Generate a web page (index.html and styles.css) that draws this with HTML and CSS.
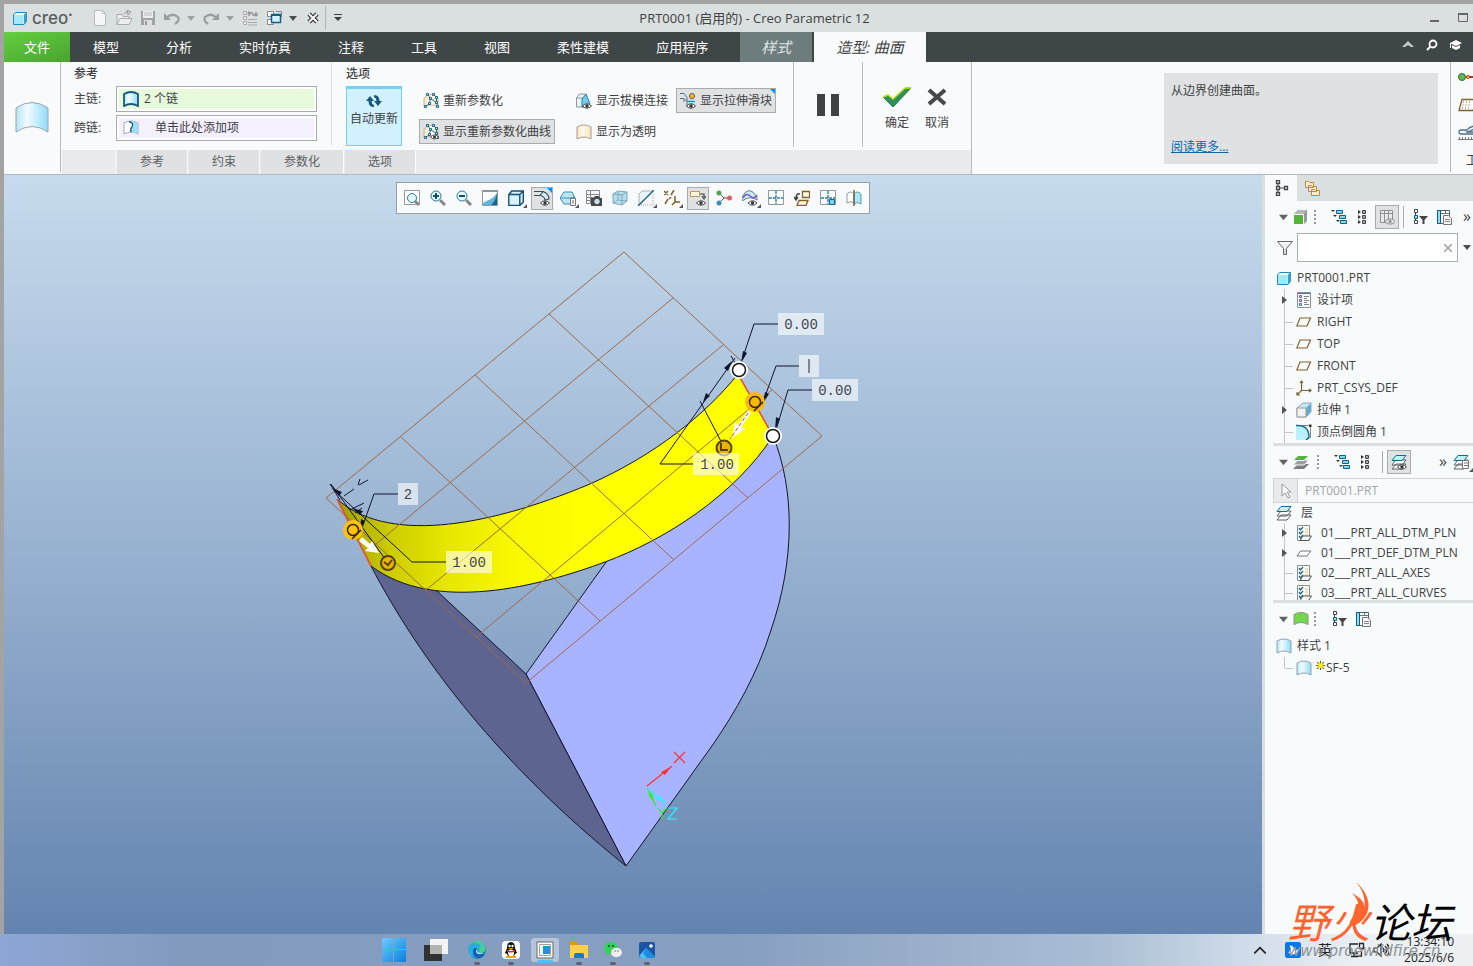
FILE: index.html
```html
<!DOCTYPE html>
<html lang="zh-CN">
<head>
    <meta charset="UTF-8">
    <meta name="viewport" content="width=device-width, initial-scale=1.0">
    <title>PRT0001 (启用的) - Creo Parametric 12</title>
    <link rel="stylesheet" href="styles.css">
</head>
<body>
    <!-- icon sprite -->
    <svg class="sprite" width="0" height="0" aria-hidden="true">
        <defs>
            <linearGradient id="gBlue"><stop offset="0" stop-color="#b4e6f8"/><stop offset=".35" stop-color="#f2fbff"/><stop offset="1" stop-color="#8fdcf8"/></linearGradient>
            <linearGradient id="gTan"><stop offset="0" stop-color="#fbe3bd"/><stop offset=".4" stop-color="#fffaf0"/><stop offset="1" stop-color="#fbe3bd"/></linearGradient>
            <linearGradient id="gGrey" x2="0" y2="1"><stop offset="0" stop-color="#fafafa"/><stop offset="1" stop-color="#cfd1d2"/></linearGradient>
            <linearGradient id="gYellow"><stop offset="0" stop-color="#9c9c00"/><stop offset=".12" stop-color="#cccc00"/><stop offset=".25" stop-color="#e6e600"/><stop offset=".4" stop-color="#f8f800"/><stop offset=".55" stop-color="#ffff00"/></linearGradient>
            <linearGradient id="gEdge" x2="1" y2="1"><stop offset="0" stop-color="#2a8fd8"/><stop offset=".45" stop-color="#2ab4dd"/><stop offset="1" stop-color="#0c4f9f"/></linearGradient>
            <linearGradient id="gWin" x2="1" y2="1"><stop offset="0" stop-color="#6ccdff"/><stop offset="1" stop-color="#0a80dc"/></linearGradient>
        </defs>
        <symbol id="caret" viewBox="0 0 8 5"><path d="M0 0h8L4 5z" fill="currentColor"/></symbol>
        <symbol id="surface" viewBox="0 0 16 16"><path d="M1 3q7-4 14 0v12q-7-4-14 0z" fill="url(#gBlue)" stroke="#93a1a8"/></symbol>
        <symbol id="surface-dark" viewBox="0 0 16 16"><path d="M1 3q7-4 14 0v12q-7-4-14 0z" fill="url(#gBlue)" stroke="#15597d" stroke-width="1.8"/></symbol>
        <symbol id="surface-green" viewBox="0 0 16 16"><path d="M1 3.500q7-4 14 0v10q-7-4-14 0z" fill="#74d84e" stroke="#8b9090"/></symbol>
        <symbol id="surface-cross" viewBox="0 0 16 16"><path d="M1 3q7-4 14 0v11q-7-4-14 0z" fill="#fff" stroke="#a0a6a8"/><path d="M8 1q4 0 7 2v11q-3-2-7-2 0-3 1-4 2-3-1-5z" fill="#9fe0f7"/><path d="M6 2q5 0 3 5-2 2-1 5" fill="none" stroke="#15597d" stroke-width="1.300"/></symbol>
        <symbol id="cube" viewBox="0 0 16 16"><path d="M1.500 4.500L4 2.500h10.500v9L12 14.500H1.500z" fill="#e8f9ff" stroke="#2788b3"/><path d="M2 5h9.500v9H2z" fill="#a5e7fb"/><path d="M12 4.500l2.500-2v9l-2.500 3z" fill="#35a3d0"/></symbol>
        <symbol id="cube-green" viewBox="0 0 16 16"><path d="M1 5l4-4h9v11l-3 3z" fill="#969899"/><path d="M1 5l4-4h9l-3.500 4z" fill="#b5b8b9"/><path d="M1 6h9v9H1z" fill="#54b435"/><path d="M1 5.500h9.500V15" fill="none" stroke="#f8fafc"/></symbol>
        <symbol id="extrude" viewBox="0 0 16 16"><path d="M1 6l6-5h8v9l-5 5H1z" fill="#c8eaf5" stroke="#84919a" stroke-width=".8"/><path d="M10 6l5-5v8l-5 6z" fill="#5daed0"/><path d="M1 6h9v9H1z" fill="#f1f1f1" stroke="#9b9b9b"/></symbol>
        <symbol id="plane" viewBox="0 0 16 16"><path d="M4 4h10.500l-3.500 8H.8z" fill="none" stroke="#80602c" stroke-width="1.200"/></symbol>
        <symbol id="layer" viewBox="0 0 16 16"><path d="M4.500 6H15l-4 5H1z" fill="#fff" stroke="#74797b"/></symbol>
        <symbol id="csys" viewBox="0 0 16 16"><path d="M5.500 1v9.500H15M5.500 10.500L1 15M4 3l1.500-2L7 3M13 9l2 1.500-2 1.500M1 12v3h3" fill="none" stroke="#80602c" stroke-width="1.200"/></symbol>
        <symbol id="round" viewBox="0 0 16 16"><path d="M0 1.500q12-1 13 13.500-4 1-13 1z" fill="#b9f0ff"/><path d="M0 1.500h14.500V14" fill="none" stroke="#888"/><path d="M0 1.500q13-1 13 12-1 1-3 2.500" fill="none" stroke="#166b92" stroke-width="1.500"/><path d="M13 .5h2.500V3H13z" fill="#333"/></symbol>
        <symbol id="design" viewBox="0 0 16 16"><path d="M1.500.500h13v15h-13z" fill="#fafafa" stroke="#8a9093"/><path d="M2 1.500h12" stroke="#2580aa"/><path d="M3.500 3.500h2v2h-2zM3.500 7.500h2v2h-2zM3.500 11.500h2v2h-2z" fill="#d8f4ff" stroke="#2580aa"/><path d="M8 4.500h5M8 6.500h3M8 8.500h5M8 10.500h3M8 12.500h5" stroke="#818789"/></symbol>
        <symbol id="layerlist" viewBox="0 0 16 16"><path d="M1.500.500h12v15h-12z" fill="#fffdf3" stroke="#8d8d88"/><path d="M3 3l1.500 2L7 2M3 7l1.500 2L7 6M3 11l1.500 2L7 10" fill="none" stroke="#17658d" stroke-width="1.300"/><path d="M9 4h3M9 7h3M9 10h3" stroke="#deb779"/><path d="M7 11h8.500l-3 4.500H4z" fill="#fff" stroke="#555"/></symbol>
        <symbol id="layers" viewBox="0 0 16 16"><path d="M5 10h10l-4 5H1zM5 6h10l-4 5H1z" fill="#fff" stroke="#586265"/><path d="M5 1.500h10l-4 5H1z" fill="#c5f0ff" stroke="#16698f"/></symbol>
        <symbol id="layers-green" viewBox="0 0 16 16"><path d="M5 10h11l-5 5H0z" fill="#7b7f80"/><path d="M5 6h11l-5 5H0z" fill="#999d9e" stroke="#f8fafc"/><path d="M5 1.500h11l-5 5H0z" fill="#54b435" stroke="#f8fafc"/></symbol>
        <symbol id="eye" viewBox="0 0 10 6"><path d="M.5 3Q5-1.500 9.500 3 5 7.500.5 3z" fill="#fff" stroke="#444"/><circle cx="5" cy="3" r="1.700" fill="#333"/></symbol>
        <symbol id="steps" viewBox="0 0 16 16"><path d="M0 1h4L2 3zM2 6h4L4 8zM5 11h4l-2 2z" fill="#333"/><path d="M5.500 1.500h6v3h-6zM8.500 6.500h6v3h-6zM9.500 11.500h6v3h-6z" fill="#80d8f5" stroke="#165d80"/></symbol>
        <symbol id="nodes" viewBox="0 0 16 16"><path d="M3 1l3 2-3 2zM3 6l3 2-3 2zM3 11l3 2-3 2z" fill="#333"/><path d="M7.500 1.500h3v3h-3zM7.500 6.500h3v3h-3zM7.500 11.500h3v3h-3z" fill="#aaa" stroke="#444"/></symbol>
        <symbol id="treefilter" viewBox="0 0 16 16"><path d="M3.500 3v10" stroke="#444"/><path d="M2.500.500h3v3h-3zM2.500 11.500h3v3h-3z" fill="#fff" stroke="#444"/><path d="M2.500 6.500h3v3h-3z" fill="#8be0fa" stroke="#165d80"/><path d="M7 7h9l-3.500 4v4h-2v-4z" fill="#444"/></symbol>
        <symbol id="table" viewBox="0 0 16 16"><path d="M1.500 1.500h12v13h-12z" fill="#fff" stroke="#4e6570"/><path d="M1.500 1.500h3v13h-3z" fill="#8be0fa" stroke="#15597d"/><path d="M5 4.500h8M9.500 2v3" stroke="#6b7579"/><path d="M7.500 6.500h5l3 3v6h-8z" fill="#f5f6f6" stroke="#777"/><path d="M9 10.500h5M9 12.500h5" stroke="#888"/></symbol>
        <symbol id="table-eye" viewBox="0 0 16 16"><path d="M1.500 1.500h12v12h-12zM1.500 4.500h12M5.500 1.500v12M9.500 1.500v12" fill="#e8e9ea" stroke="#8c9091"/><ellipse cx="11" cy="12.500" rx="4.500" ry="2.500" fill="#e1e2e3" stroke="#8c9091"/><circle cx="11" cy="12.500" r="1.500" fill="#8c9091"/></symbol>
        <symbol id="param" viewBox="0 0 16 16"><path d="M1 14V5q7-7 14 0v9q-7-4-14 0z" fill="url(#gTan)" stroke="#b9a888" stroke-width=".8"/><path d="M4.500 1.500l3 4-1 5-4 3M10.500 1.500l3 3v5l1 4M7.500 5.500l6 4" fill="none" stroke="#267ca5"/><path d="M3.500.500h2v2h-2zM6.500 4.500h2v2h-2zM5.500 9.500h2v2h-2zM1.500 12.500h2v2h-2zM9.500.500h2v2h-2zM12.500 3.500h2v2h-2zM12.500 8.500h2v2h-2zM13.500 12.500h2v2h-2z" fill="#d8f4ff" stroke="#17658d"/></symbol>
        <symbol id="refresh" viewBox="0 0 16 14"><path d="M0 7l4-5 4 5H5.500q0 3 2.500 4v2Q2.500 13 2.500 7z" fill="#17597c"/><path d="M16 7l-4 5-4-5h2.500q0-3-2.500-4V1q5.500 0 5.500 6z" fill="#17597c"/></symbol>
    </svg>

    <div class="window">
        <header class="titlebar">
            <div class="quick-access">
                <svg class="app-icon" viewBox="0 0 16 16"><use href="#cube"/></svg>
                <span class="brand">creo<sup>•</sup></span>
                <button aria-label="新建"><svg viewBox="0 0 16 16"><path d="M2.500.500h8l3 3v12h-11z" fill="#f6f6f6" stroke="#b8bcbc"/><path d="M10.500.500v3h3" fill="none" stroke="#b8bcbc"/></svg></button>
                <button aria-label="打开"><svg viewBox="0 0 16 16"><path d="M1 14.500v-10h5l1 2h6v3M1 14.500l3-6h12l-3 6z" fill="#edeeee" stroke="#a8acac"/><path d="M8 4q1-3 5-2M11 0l4 2-3 3z" fill="none" stroke="#999"/></svg></button>
                <button aria-label="保存"><svg viewBox="0 0 16 16"><path d="M1 1h14v14H1z" fill="#a1a4a4"/><path d="M3 1h10v7H3z" fill="#eee"/><path d="M4 3h8M4 5h8" stroke="#bbb"/><path d="M4 10h8v5H4z" fill="#dedede"/><path d="M5 11h2v4H5z" fill="#999"/></svg></button>
                <button aria-label="撤消"><svg viewBox="0 0 16 16"><path d="M2 8q6-6 12-1 2 4-3 7" fill="none" stroke="#989e9e" stroke-width="2.200"/><path d="M0 3v7h7z" fill="#989e9e"/></svg><svg class="caret dim"><use href="#caret"/></svg></button>
                <button aria-label="重做"><svg viewBox="0 0 16 16"><path d="M14 8q-6-6-12-1-2 4 3 7" fill="none" stroke="#989e9e" stroke-width="2.200"/><path d="M16 3v7H9z" fill="#989e9e"/></svg><svg class="caret dim"><use href="#caret"/></svg></button>
                <button aria-label="重新生成"><svg viewBox="0 0 16 16"><path d="M1.500 1.500h3v3h-3zM1.500 6.500h3v3h-3zM1.500 11.500h3v3h-3z" fill="#eee" stroke="#aaa"/><path d="M6 9.500h9M6 12.500h9M6 15h9" stroke="#aaa"/><path d="M7 6V3h4M14 2v3h-4M6 4l1-2 2 2M12 4l2 2 2-2" fill="none" stroke="#929797" stroke-width="1.500"/></svg></button>
                <button aria-label="窗口"><svg viewBox="0 0 16 16"><path d="M1.500 1.500h6v5h-6zM1.500 9.500h6v5h-6z" fill="#fff" stroke="#888"/><path d="M10 1.500h5.500V7" fill="none" stroke="#888"/><path d="M5.500 4.500h9v8h-9z" fill="#d2f3ff" stroke="#185d80" stroke-width="1.500"/><path d="M5 5h10" stroke="#185d80" stroke-width="2"/></svg><svg class="caret"><use href="#caret"/></svg></button>
                <button aria-label="关闭"><svg viewBox="0 0 16 16"><path d="M4 4l8 8M12 4l-8 8" stroke="#333" stroke-width="4.500"/><path d="M4 4l8 8M12 4l-8 8" stroke="#fff" stroke-width="2"/></svg></button>
                <button class="customize" aria-label="自定义"><svg class="caret" viewBox="0 0 8 8"><path d="M0 .5h8" stroke="#3c4041"/><path d="M0 3h8L4 7z" fill="#3c4041"/></svg></button>
            </div>
            <h1>PRT0001 (启用的) - Creo Parametric 12</h1>
            <div class="window-controls">
                <button aria-label="最小化"><svg viewBox="0 0 12 12"><path d="M1 8h9v2H1z" fill="#666"/></svg></button>
                <button aria-label="最大化"><svg viewBox="0 0 12 12"><path d="M1.500 1.500h9v8h-9z" fill="none" stroke="#666"/><path d="M1 2h10" stroke="#666" stroke-width="2"/></svg></button>
            </div>
        </header>

        <nav class="menubar">
            <button class="file">文件</button>
            <button>模型</button>
            <button>分析</button>
            <button>实时仿真</button>
            <button>注释</button>
            <button>工具</button>
            <button>视图</button>
            <button>柔性建模</button>
            <button>应用程序</button>
            <button class="context">样式</button>
            <button class="context active">造型: 曲面</button>
            <div class="menu-tools">
                <button aria-label="折叠功能区"><svg viewBox="0 0 12 12"><path d="M0 8l6-6 6 6H9L6 6 3 8z" fill="#c9cccc"/></svg></button>
                <button aria-label="搜索"><svg viewBox="0 0 12 12"><circle cx="7" cy="5" r="3.500" fill="none" stroke="#fff" stroke-width="1.800"/><path d="M4.500 7.500L1 11" stroke="#fff" stroke-width="2"/></svg></button>
                <button aria-label="学习"><svg viewBox="0 0 12 12"><path d="M0 4l6-3 6 3-6 3zM2 6l4 2 4-2v3l-4 2-4-2zM0 4h1v5H0z" fill="#fff"/></svg></button>
            </div>
        </nav>

        <section class="ribbon">
            <div class="ribbon-icon"><svg viewBox="0 0 34 32"><path d="M1 6q16-11 32 0v24q-16-11-32 0z" fill="url(#gBlue)" stroke="#9aa4a9"/></svg></div>
            <div class="dashboard">
                <div class="groups">
                    <div class="group refs">
                        <h2>参考</h2>
                        <div class="ref-row">
                            <span>主链:</span>
                            <button class="collector picked"><svg><use href="#surface-dark"/></svg>2 个链</button>
                        </div>
                        <div class="ref-row">
                            <span>跨链:</span>
                            <button class="collector empty"><svg><use href="#surface-cross"/></svg>单击此处添加项</button>
                        </div>
                    </div>
                    <div class="group options">
                        <h2>选项</h2>
                        <div class="option-cols">
                            <button class="auto-update"><svg viewBox="0 0 16 14"><use href="#refresh"/></svg>自动更新</button>
                            <div class="option-col">
                                <button class="tool"><svg><use href="#param"/></svg>重新参数化</button>
                                <button class="tool pressed"><svg viewBox="0 0 16 16"><use href="#param"/><use href="#eye" x="7" y="10" width="9" height="6"/></svg>显示重新参数化曲线</button>
                            </div>
                            <div class="option-col wide">
                                <div class="option-line">
                                    <button class="tool"><svg viewBox="0 0 16 16"><path d="M.5 5l3-4h6v13h-9zM.5 5h6v9" fill="#e9f5fa" stroke="#8a979d"/><path d="M6 14V6l4-5 4 10-3 3z" fill="#72cdec" stroke="#267ca5"/><use href="#eye" x="6" y="10" width="10" height="6"/></svg>显示拔模连接</button>
                                    <button class="tool pressed flagged"><svg viewBox="0 0 16 16"><path d="M8 6h7v6H8z" fill="#9fe4fb"/><path d="M0 .5h4l3 4v9M0 5.500h4l3 3h8M4 9v-3" fill="none" stroke="#537585"/><circle cx="12" cy="3" r="2.500" fill="#ffc107" stroke="#555"/><use href="#eye" x="6" y="10" width="10" height="6"/></svg>显示拉伸滑块</button>
                                </div>
                                <button class="tool"><svg viewBox="0 0 16 16"><path d="M1 3q7-4 14 0v12q-7-4-14 0z" fill="url(#gTan)" stroke="#a69c89"/></svg>显示为透明</button>
                            </div>
                        </div>
                    </div>
                    <button class="pause" aria-label="暂停"><svg viewBox="0 0 24 22"><path d="M1 0h8v22H1zM15 0h8v22h-8z" fill="#3f4142"/></svg></button>
                    <div class="confirm">
                        <button><svg viewBox="0 0 30 22"><path d="M1 11l5-2 5 4L24 2h5L11 21z" fill="#2e915d" stroke="#2a7d3c"/><path d="M1 11l5-2 5 4L23 2h6" fill="none" stroke="#bfe51b" stroke-width="1.500"/></svg>确定</button>
                        <button><svg viewBox="0 0 30 22"><path d="M7 4l16 14M23 4L7 18" stroke="#454748" stroke-width="4"/></svg>取消</button>
                    </div>
                </div>
                <div class="panel-tabs">
                    <span class="spacer"></span>
                    <button>参考</button>
                    <button>约束</button>
                    <button class="long">参数化</button>
                    <button>选项</button>
                </div>
            </div>
            <aside class="help">
                <p>从边界创建曲面。</p>
                <a href="#">阅读更多...</a>
            </aside>
            <div class="overflow-tools">
                <svg viewBox="0 0 16 16"><path d="M8 8h8" stroke="#a33" stroke-width="2"/><circle cx="4" cy="8" r="3.500" fill="#62ba55" stroke="#2e6b2a"/><circle cx="10" cy="8" r="1.500" fill="#ffe04a" stroke="#a33"/></svg>
                <svg viewBox="0 0 16 16"><path d="M4 2.500h15l-4 11H1z" fill="#fff" stroke="#80602c" stroke-width="1.300"/><path d="M5 5h9M4.500 8h9M4 11h9" stroke="#80602c" stroke-dasharray="1 2"/></svg>
                <svg viewBox="0 0 16 16"><path d="M16 1Q11 2 9 5H3Q1 5 1 7t2 2h5M16 4q-5 3-8 3h8M8 9h8" fill="none" stroke="#4f7488" stroke-width="1.300"/><path d="M0 14.500h16M1.500 12v2M4.500 12v2M7.500 12v2M10.500 12v2M13.500 12v2" stroke="#777"/></svg>
                <span>工</span>
            </div>
        </section>

        <main class="workspace">
            <section class="viewport">
                <div class="view-toolbar">
                    <button aria-label="重新调整"><svg viewBox="0 0 16 16"><path d="M.5.500h15v14H.5z" fill="#fff" stroke="#999"/><path d="M11 11l4 4" stroke="#888" stroke-width="3"/><circle cx="8" cy="8" r="4.500" fill="#e4f8ff" stroke="#267ca5"/></svg></button>
                    <button aria-label="放大"><svg viewBox="0 0 16 16"><path d="M10 10l5 5" stroke="#888" stroke-width="3"/><circle cx="6" cy="6" r="5" fill="#e4f8ff" stroke="#267ca5"/><path d="M3 6h6M6 3v6" stroke="#174e6e" stroke-width="2"/></svg></button>
                    <button aria-label="缩小"><svg viewBox="0 0 16 16"><path d="M10 10l5 5" stroke="#888" stroke-width="3"/><circle cx="6" cy="6" r="5" fill="#e4f8ff" stroke="#267ca5"/><path d="M3 6h6" stroke="#174e6e" stroke-width="2"/></svg></button>
                    <button aria-label="重画"><svg viewBox="0 0 16 16"><path d="M.5.500h15v15H.5z" fill="#fff" stroke="#8b9aa1"/><path d="M15 3v12H1q0-4 4-5 4 1 10-7z" fill="#5fb4d8"/><path d="M15 3v12H9q5-4 6-12z" fill="#17658d"/><path d="M2 12q1-4 3-1" fill="none" stroke="#fff" stroke-width="2"/><path d="M0 1h16" stroke="#8b9aa1" stroke-width="2"/></svg></button>
                    <button class="more" aria-label="显示样式"><svg viewBox="0 0 16 16"><path d="M.8 4.500l3-3.500h11.500v11l-3.500 3.500H.8zM.8 4.500h11v11M11.800 4.500L15.300 1" fill="#d4f3fc" stroke="#174f70" stroke-width="1.400"/></svg></button>
                    <button class="pressed flagged" aria-label="草绘显示"><svg viewBox="0 0 16 16"><path d="M5 1h5q6 3 5 10l-4-2Q10 5 5 5z" fill="#cfeef8"/><path d="M0 1.500h9q6 2 6 8M0 5.500h6q5 1 5 5M9 1.500L6 5.500M11 10l4-1" fill="none" stroke="#3d4d4e" stroke-width="1.200"/><use href="#eye" x="6" y="10" width="10" height="6"/></svg></button>
                    <button class="more" aria-label="已保存方向"><svg viewBox="0 0 16 16"><path d="M0 8l4-6h8l3 6v2l-4 4H4z" fill="#bbe7f5" stroke="#418dad"/><path d="M0 8h11l4-1M11 8v5" fill="none" stroke="#418dad"/><path d="M10.500 8.500h5v7h-5z" fill="#fff" stroke="#777"/><path d="M12 11h2M12 13h2" stroke="#666"/></svg></button>
                    <button aria-label="视图管理器"><svg viewBox="0 0 16 16"><path d="M.5.500h13v13H.5zM.5 4.500h13M.5 7.500h13M.5 10.500h13M4.500.500v13" fill="#f5f5f5" stroke="#888"/><path d="M5 8h3l1-2h4l1 2h2v8H5z" fill="#464849"/><circle cx="11" cy="11.500" r="2.300" fill="#bde8fa" stroke="#ddd"/></svg></button>
                    <button aria-label="透视图"><svg viewBox="0 0 16 16"><path d="M1 4l5-3 9 1v9l-5 4-9-2zM1 4l9 1v10M10 5l5-3" fill="#b5dfed" stroke="#79a8ba"/><path d="M6 2v8l-5 3M6 10l9 1" fill="none" stroke="#87a9b7"/></svg></button>
                    <button class="more" aria-label="截面"><svg viewBox="0 0 16 16"><path d="M1 15V4l3-3h11z" fill="#e7f5fa" stroke="#aab5ba"/><path d="M3 15h12V3" fill="none" stroke="#9aa5aa" stroke-dasharray="1 1"/><path d="M0 16L16 0" stroke="#17597c" stroke-width="1.300"/></svg></button>
                    <button class="more" aria-label="基准显示"><svg viewBox="0 0 16 16"><path d="M0 1l4 4M4 1L0 5M10 0L7 5M4 9l-3 5M11 6v6h5M11 12l-3 3M7 7l-2 2" fill="none" stroke="#80602c" stroke-width="1.500"/></svg></button>
                    <button class="pressed" aria-label="注释显示"><svg viewBox="0 0 16 16"><path d="M.5 1.500h9v5h-9z" fill="#fff4d6" stroke="#b89b65"/><path d="M10 4h4v3M12 6l2 3 2-3" fill="none" stroke="#444" stroke-width="1.200"/><use href="#eye" x="6" y="10" width="10" height="6"/></svg></button>
                    <button aria-label="旋转中心"><svg viewBox="0 0 16 16"><path d="M3 3l5 5-5 5M8 8h6" fill="none" stroke="#555"/><circle cx="3" cy="3" r="2.500" fill="#4fa452"/><circle cx="3" cy="13" r="2.500" fill="#3a8fbd"/><circle cx="13.500" cy="8" r="2.500" fill="#e0605f"/></svg></button>
                    <button class="more" aria-label="曲面显示"><svg viewBox="0 0 16 16"><path d="M0 7q7-13 15 0v3q-7-5-15 1z" fill="#c5ecf8" stroke="#5f8797"/><path d="M1 8q3-6 7-2t7-1" fill="none" stroke="#8a4fc4" stroke-width="1.500"/><use href="#eye" x="5" y="10" width="11" height="6"/></svg></button>
                    <button aria-label="单视图"><svg viewBox="0 0 16 16"><path d="M.5.500h15v14H.5z" fill="#fff" stroke="#8e9b9f"/><path d="M8 1v13M1 8h14" stroke="#267ca5" stroke-width="1.400" stroke-dasharray="3 1"/></svg></button>
                    <button aria-label="活动平面"><svg viewBox="0 0 16 16"><path d="M8.500 1.500h7v6h-7zM5 10.500h9l-2 5H3z" fill="#fffbe9" stroke="#80602c" stroke-width="1.300"/><path d="M6 4q-4-1-4 5M0 7l2 3 2-3" fill="none" stroke="#444" stroke-width="1.500"/></svg></button>
                    <button aria-label="四视图"><svg viewBox="0 0 16 16"><path d="M.5.500h15v14H.5z" fill="#fff" stroke="#8e9b9f"/><path d="M8 1v13M1 8h14" stroke="#267ca5" stroke-width="1.400" stroke-dasharray="3 1"/><path d="M9.500 9.500h5v5h-5z" fill="#72d5f8" stroke="#17658d"/></svg></button>
                    <button aria-label="镜像"><svg viewBox="0 0 16 16"><path d="M1 4q4-4 7 0v9q-3-3-7 0z" fill="#fff" stroke="#8e9b9f"/><path d="M8 4q3-4 7 0v10q-4-3-7 0z" fill="#a7e7fb" stroke="#5f99b0"/><path d="M8 0v16" stroke="#80602c" stroke-width="1.500"/></svg></button>
                </div>
                <svg class="model" viewBox="4 175 1258 759">
                    <!-- solid -->
                    <g stroke="#15152b" stroke-width="1" stroke-linejoin="round">
                        <path d="M526 674L609 558L700 450L773 436C795 490 795 560 771 630C757 675 735 712 714 743L626 866z" fill="#a8b4ff"/>
                        <path d="M371 566C420 660 500 765 626 866L526 674L437 591z" fill="#5c648f"/>
                        <path d="M337 499C385 542 480 530 590 484C655 455 705 415 738 374L773 436C735 495 665 540 605 562C540 586 435 614 371 566z" fill="url(#gYellow)"/>
                    </g>
                    <path d="M337 499L371 566M738 374L773 436" stroke="#ff4b3c" stroke-width="1.500"/>
                    <!-- internal datum grid -->
                    <path d="M624 252L822 436L526 683L326 498zM549 314L748 498M475 375L674 560M401 437L600 621M673 298L376 544M723 345L426 590M772 390L476 637" fill="none" stroke="#9b6a4c"/>
                    <!-- leaders -->
                    <g fill="none" stroke="#10142e">
                        <path d="M778 324H754L742 360M799 366H776L763 402M812 390H788L776 430M398 494H374L362 528M446 562H412L334 490M331 484L388 563M693 464H660L735 358M700 401L724 447M731 356L738 368M330 484L340 500"/>
                        <path d="M344 496L354 489M359 485L368 480M360 479L358 485M350 510L364 503M355 513L362 508"/>
                    </g>
                    <path d="M741 363l2-12 4 2zM763 403l2-11 4 2zM775 430l1-13 4 2zM360 530l1-11 4 2zM732 361l-8 7 4 3zM703 402l3-9 4 3zM332 488l10 4-3 4zM352 508l11 3-3 4z" fill="#10142e"/>
                    <!-- drag handles -->
                    <circle cx="755" cy="402" r="10" fill="#ffb900"/>
                    <circle cx="353" cy="530" r="10" fill="#ffc20a"/>
                    <g fill="none" stroke="#33270a" stroke-width="1.500">
                        <circle cx="755" cy="402" r="5.500"/>
                        <path d="M754 411L763 402M352 539L361 530"/>
                        <circle cx="353" cy="530" r="5.500"/>
                    </g>
                    <g fill="#e8b400" stroke="#57420b" stroke-width="2">
                        <circle cx="724" cy="448" r="7.500"/>
                        <path d="M721 443v7h7" fill="none"/>
                        <circle cx="388" cy="563" r="7"/>
                        <path d="M384 562l4 3 4-5" fill="none"/>
                    </g>
                    <path d="M748 410l3 3-10 14 4 2-13 9 3-16 3 3zM362 537l8 7 2-3 7 12-14-2 3-3-9-7z" fill="#fff"/>
                    <path d="M748 413L730 439" stroke="#e23b3b" stroke-dasharray="4 2"/>
                    <g fill="#fff" stroke="#151515" stroke-width="1.500">
                        <circle cx="739" cy="370" r="7.500" stroke="#fff" stroke-width="3"/>
                        <circle cx="739" cy="370" r="6.500"/>
                        <circle cx="773" cy="436" r="7.500" stroke="#fff" stroke-width="3"/>
                        <circle cx="773" cy="436" r="6.500"/>
                    </g>
                    <g fill="#fff" fill-opacity=".6">
                        <path d="M778 313h46v22h-46zM799 355h20v22h-20zM812 379h46v22h-46zM693 453h46v22h-46zM398 483h20v22h-20zM446 551h46v22h-46z"/>
                    </g>
                    <g class="dims">
                        <text x="801" y="329">0.00</text>
                        <text x="809" y="370">|</text>
                        <text x="835" y="395">0.00</text>
                        <text x="717" y="469">1.00</text>
                        <text x="408" y="499">2</text>
                        <text x="469" y="567">1.00</text>
                    </g>
                    <!-- view triad -->
                    <g fill="none" stroke-width="1.200">
                        <path d="M647 786L672 766M674 752L685 763M685 752L674 763" stroke="#ff3030"/>
                        <path d="M647 788L656 806M658 808L662 813L667 808M662 813V819" stroke="#28f028"/>
                        <path d="M647 788L667 805M668 808H677L668 819H677" stroke="#28f0ff"/>
                    </g>
                    <path d="M671 767l-6 8-4-3z" fill="#ff3030"/>
                    <path d="M655 804l-7-10 4-1z" fill="#28f028"/>
                    <path d="M665 803l-9-4 3-4z" fill="#28f0ff"/>
                </svg>
            </section>

            <aside class="navigator">
                <div class="nav-tabs">
                    <button class="active" aria-label="模型树"><svg viewBox="0 0 16 16"><path d="M5 4v8M5 8h6" stroke="#444"/><path d="M3.500.500h3v3h-3zM3.500 6.500h3v3h-3zM3.500 12.500h3v3h-3zM11.500 6.500h3v3h-3z" fill="#fff" stroke="#444" stroke-width="1.300"/></svg></button>
                    <button aria-label="文件夹"><svg viewBox="0 0 16 16"><path d="M.5 1.500h3l1 1h4v5h-8zM3.500 5.500h3l1 1h4v5h-8zM6.500 9.500h3l1 1h4v5h-8z" fill="#ffedc5" stroke="#bd8a3f"/></svg></button>
                </div>

                <section class="pane">
                    <div class="pane-tools">
                        <svg class="caret big"><use href="#caret"/></svg>
                        <svg class="kind"><use href="#cube-green"/></svg>
                        <span class="grip"></span>
                        <button aria-label="展开"><svg><use href="#steps"/></svg></button>
                        <button aria-label="全部"><svg><use href="#nodes"/></svg></button>
                        <button class="pressed" aria-label="列显示"><svg><use href="#table-eye"/></svg></button>
                        <span class="bar"></span>
                        <button aria-label="树过滤器"><svg><use href="#treefilter"/></svg></button>
                        <button aria-label="树列"><svg><use href="#table"/></svg></button>
                        <span class="chevrons">»</span>
                    </div>
                    <div class="filter">
                        <svg viewBox="0 0 16 16"><path d="M.5 1.500h15l-6 7v6h-3v-6z" fill="url(#gGrey)" stroke="#666"/></svg>
                        <input type="text" aria-label="搜索模型树">
                        <svg class="clear" viewBox="0 0 8 8"><path d="M0 0l8 8M8 0L0 8" stroke="#999" stroke-width="1.300"/></svg>
                        <svg class="caret"><use href="#caret"/></svg>
                    </div>
                    <ul class="tree">
                        <li class="root"><svg><use href="#cube"/></svg>PRT0001.PRT</li>
                        <li class="closed"><svg><use href="#design"/></svg>设计项</li>
                        <li><svg><use href="#plane"/></svg>RIGHT</li>
                        <li><svg><use href="#plane"/></svg>TOP</li>
                        <li><svg><use href="#plane"/></svg>FRONT</li>
                        <li><svg><use href="#csys"/></svg>PRT_CSYS_DEF</li>
                        <li class="closed"><svg><use href="#extrude"/></svg>拉伸 1</li>
                        <li><svg><use href="#round"/></svg>顶点倒圆角 1</li>
                    </ul>
                </section>

                <section class="pane">
                    <div class="pane-tools">
                        <svg class="caret big"><use href="#caret"/></svg>
                        <svg class="kind"><use href="#layers-green"/></svg>
                        <span class="grip wide"></span>
                        <button aria-label="展开"><svg><use href="#steps"/></svg></button>
                        <button aria-label="全部"><svg><use href="#nodes"/></svg></button>
                        <span class="bar"></span>
                        <button class="pressed" aria-label="层显示"><svg viewBox="0 0 16 16"><use href="#layers"/><use href="#eye" x="6" y="10" width="10" height="6"/></svg></button>
                        <span class="chevrons">»</span>
                        <button class="more" aria-label="层设置"><svg viewBox="0 0 16 16"><use href="#layers"/><path d="M9.500 6.500h6v8h-6z" fill="#fff" stroke="#777"/><path d="M11 9h4M11 11.500h4" stroke="#777"/></svg></button>
                    </div>
                    <div class="layer-model">
                        <button aria-label="选择"><svg viewBox="0 0 16 16"><path d="M4 1v12l3-3 3 5 2-1-3-5h4z" fill="#fff" stroke="#999"/></svg></button>
                        <input type="text" aria-label="活动层对象" value="PRT0001.PRT" disabled>
                    </div>
                    <ul class="tree layers">
                        <li class="root"><svg><use href="#layers"/></svg>层</li>
                        <li class="closed"><svg><use href="#layerlist"/></svg>01___PRT_ALL_DTM_PLN</li>
                        <li class="closed"><svg><use href="#layer"/></svg>01___PRT_DEF_DTM_PLN</li>
                        <li><svg><use href="#layerlist"/></svg>02___PRT_ALL_AXES</li>
                        <li><svg><use href="#layerlist"/></svg>03___PRT_ALL_CURVES</li>
                    </ul>
                </section>

                <section class="pane">
                    <div class="pane-tools">
                        <svg class="caret big"><use href="#caret"/></svg>
                        <svg class="kind"><use href="#surface-green"/></svg>
                        <span class="grip"></span>
                        <button aria-label="树过滤器"><svg><use href="#treefilter"/></svg></button>
                        <button aria-label="树列"><svg><use href="#table"/></svg></button>
                    </div>
                    <ul class="tree style-tree">
                        <li class="root"><svg><use href="#surface"/></svg>样式 1</li>
                        <li class="last"><svg><use href="#surface"/></svg><svg class="star" viewBox="0 0 8 8"><path d="M4 0v8M0 4h8M1 1l6 6M7 1L1 7" stroke="#665c00"/><path d="M2 2h4v4H2z" fill="#fff000"/></svg>SF-5</li>
                    </ul>
                </section>
            </aside>
        </main>
    </div>

    <footer class="taskbar">
        <div class="apps">
            <button class="start" aria-label="开始"><svg viewBox="0 0 24 24"><path d="M0 0h11v11H0zM12 0h12v11H12zM0 12h11v12H0zM12 12h12v12H12z" fill="url(#gWin)"/><path d="M11.500 0v24M0 11.500h24" stroke="#869dbf"/></svg></button>
            <button class="start" aria-label="任务视图"><svg viewBox="0 0 24 24"><path d="M0 7h18v16H0z" fill="#2f3133"/><path d="M6 1h18v15H6z" fill="#f3f3f3"/><path d="M6 7h12v9H6z" fill="#b2b4b4"/></svg></button>
            <button class="running" aria-label="Edge"><svg viewBox="0 0 18 18"><circle cx="9" cy="9" r="9" fill="url(#gEdge)"/><path d="M4 2q7-5 12 2 4 6-2 8h-4q3-3 0-5-4-2-9 1 0-3 3-6z" fill="#43cf95"/><path d="M3 3q6-3 10 2l-2 2Q6 4 0 9q0-3 3-6z" fill="#29a9dc"/><path d="M5 9q1-3 4-2-2 7 7 6-2 4-6 4-6-2-5-8z" fill="#1160b2"/><path d="M9 8q-1 5 7 4-6 3-8-1 0-2 1-3z" fill="#b5dff2"/></svg></button>
            <button class="running" aria-label="QQ"><svg viewBox="0 0 18 18"><rect width="18" height="18" rx="4" fill="#fff"/><path d="M5 7q0-6 4-6t4 6l2 5-2 1q-1 3-4 3t-4-3l-2-1z" fill="#111"/><ellipse cx="9" cy="12" rx="3" ry="3.500" fill="#fff"/><circle cx="7.500" cy="5" r="1.200" fill="#fff"/><circle cx="10.500" cy="5" r="1.200" fill="#fff"/><path d="M6 7h6l-3 1.500z" fill="#f6a400"/><path d="M5 9q4 2 8 0v1.500q-4 2-8 0z" fill="#e32222"/><path d="M4 16h5M9 16h5" stroke="#f6a400" stroke-width="2"/></svg></button>
            <button class="running current" aria-label="Creo"><svg viewBox="0 0 18 18"><path d="M1 1h16v16H1z" fill="#fff" stroke="#666"/><path d="M3.500 3.500h11v11h-11z" fill="#edf8fb" stroke="#a99f91"/><path d="M7 5h7v8H7z" fill="#1598d8"/></svg></button>
            <button class="running" aria-label="文件资源管理器"><svg viewBox="0 0 18 18"><path d="M0 1h7l2 3H0z" fill="#d89a18"/><path d="M0 4h18v13H0z" fill="#ffd04c"/><path d="M4 17v-3q0-2 2-2h6q2 0 2 2v3z" fill="#1978ca"/></svg></button>
            <button class="running" aria-label="微信"><svg viewBox="0 0 18 18"><ellipse cx="7" cy="7" rx="7" ry="6" fill="#36d15b"/><path d="M2 10v5l4-3z" fill="#36d15b"/><ellipse cx="12.500" cy="11.500" rx="5.500" ry="4.700" fill="#eee"/><circle cx="5" cy="5" r="1" fill="#174b22"/><circle cx="9" cy="5" r="1" fill="#174b22"/><circle cx="11" cy="10" r=".8" fill="#777"/><circle cx="14" cy="10" r=".8" fill="#777"/></svg></button>
            <button class="running" aria-label="照片"><svg viewBox="0 0 18 18"><rect x="1" y="1" width="16" height="16" rx="2" fill="#1c55a4"/><path d="M1 15L8 7l9 9-2 1H3z" fill="#48c3f5"/><path d="M8 7l9 9-2 1H9l-4-5z" fill="#1c8de2"/><circle cx="13" cy="5" r="1.800" fill="#fff"/></svg></button>
        </div>
        <div class="tray">
            <button aria-label="显示隐藏的图标"><svg viewBox="0 0 14 14"><path d="M2 10l5-5 5 5" fill="none" stroke="#222" stroke-width="1.500"/></svg></button>
            <button aria-label="飞书"><svg viewBox="0 0 14 14"><rect width="14" height="14" rx="2" fill="#0877ef"/><path d="M4 3q4 0 5 5l4-3q-2 6-7 6-2 0-3-2 3-2 1-6z" fill="#fff"/></svg></button>
            <button class="ime">英</button>
            <button aria-label="网络"><svg viewBox="0 0 16 16"><path d="M9 11H1V2h8M5 11v3M2 14.500h7M10.500 1.500h4v5h-4zM12.500 7v7h-4" fill="none" stroke="#222" stroke-width="1.300"/></svg></button>
            <button class="volume" aria-label="音量"><svg viewBox="0 0 16 16"><path d="M1 6h3l4-4v12l-4-4H1zM10 6q2 2 0 4M12 4q4 4 0 8M14 2q5 6 0 12" fill="none" stroke="#222" stroke-width="1.200"/></svg></button>
            <time class="clock"><span>13:34:10</span><span>2025/6/6</span></time>
        </div>
    </footer>

    <div class="watermark">
        <svg viewBox="0 0 24 46"><path d="M10 0C27 15 27 35 8 44C3 42 3 40 6 37C14 29 15 20 6 11C17 17 19 22 18 27C20 18 17 8 10 0z" fill="#ff6430"/></svg>
        <div class="forum"><span>野火</span>论坛</div>
        <div class="site">www.proewildfire.cn</div>
    </div>
</body>
</html>
```
FILE: styles.css
```css
* {
    box-sizing: border-box;
}
body {
    margin: 0;
    height: 100vh;
    display: flex;
    flex-direction: column;
    overflow: hidden;
    position: relative;
    font-family: "Open Sans", "Noto Sans CJK SC", sans-serif;
    font-size: 12px;
    line-height: 16px;
    color: #3f4142;
}
button, input {
    font: inherit;
    color: inherit;
    border: none;
    background: none;
    padding: 0;
    margin: 0;
}
button {
    display: flex;
    align-items: center;
    justify-content: center;
    white-space: nowrap;
    position: relative;
}
svg {
    display: block;
    width: 16px;
    height: 16px;
    flex: none;
}
h1, h2, p, ul {
    margin: 0;
    padding: 0;
    font-size: 12px;
}
.sprite {
    position: absolute;
    width: 0;
    height: 0;
}
.caret {
    width: 8px;
    height: 5px;
    color: #4a4d4e;
}
.caret.dim {
    color: #9da1a1;
}
.pressed {
    background-color: #dfe1e3;
    border: 1px solid #a9abac;
}
.flagged::after {
    content: "";
    position: absolute;
    top: 0;
    right: 0;
    border-top: 5px solid #0a8cf0;
    border-left: 5px solid transparent;
}
.more::after {
    content: "";
    position: absolute;
    bottom: 2px;
    right: 0;
    border-bottom: 4px solid #555;
    border-left: 4px solid transparent;
}

.window {
    flex: 1;
    min-height: 0;
    display: flex;
    flex-direction: column;
    border-top: 4px solid #a3a3a3;
    border-left: 4px solid #a3a3a3;
}

/* title bar */
.titlebar {
    height: 28px;
    display: grid;
    grid-template-columns: 1fr auto 1fr;
    align-items: center;
    background-color: #dae0df;
}
.quick-access {
    display: flex;
    align-items: center;
    gap: 8px;
    padding-left: 8px;
}
.quick-access button {
    gap: 7px;
}
.brand {
    width: 48px;
    margin-left: -4px;
    margin-right: 4px;
    font-family: Inter, sans-serif;
    font-weight: 500;
    font-size: 17px;
    line-height: 24px;
    white-space: nowrap;
    color: #5a5f60;
}
.brand sup {
    font-size: 8px;
    line-height: 8px;
}
.quick-access .customize {
    height: 24px;
    padding-left: 8px;
    margin-left: -4px;
    border-left: 1px solid #b0b5b5;
}
.customize .caret {
    height: 8px;
}
.titlebar h1 {
    margin-left: 32px;
    font-size: 13px;
    font-weight: normal;
}
.window-controls {
    display: flex;
    justify-content: flex-end;
    gap: 16px;
    padding-right: 4px;
}
.window-controls svg, .menu-tools svg {
    width: 12px;
    height: 12px;
}

/* menu bar */
.menubar {
    height: 30px;
    display: flex;
    background-color: #3e4647;
    color: #fff;
    font-size: 13px;
}
.menubar > button {
    padding: 0 24px 0 23px;
}
.menubar > .file {
    padding: 0 20px;
    background: linear-gradient(160deg, #62cf40, #4ba32f);
}
.menubar > .context {
    padding: 0 21px;
    font-size: 15px;
    font-style: italic;
    color: #dfe5e5;
    background-color: #6d7d7e;
}
.menubar > .context:not(.active) {
    margin-left: 8px;
    margin-right: 2px;
}
.menubar > .context.active {
    padding: 0 22px;
    background-color: #f8fafc;
    color: #3f4142;
}
.menu-tools {
    margin-left: auto;
    display: flex;
    gap: 12px;
    padding-right: 11px;
    padding-bottom: 4px;
}

/* ribbon */
.ribbon {
    height: 113px;
    display: flex;
    background-color: #f8fafc;
    border-bottom: 1px solid #b0bcbc;
}
.ribbon-icon {
    width: 57px;
    padding: 40px 0 0 11px;
    border-right: 1px solid #b7babb;
    margin-bottom: 2px;
}
.ribbon-icon svg {
    width: 34px;
    height: 32px;
}
.dashboard {
    display: flex;
    flex-direction: column;
    border-right: 1px solid #b7babb;
    width: 911px;
    padding-left: 1px;
}
.groups {
    flex: 1;
    display: flex;
}
.group {
    padding-top: 4px;
}
.group h2 {
    font-weight: 500;
    margin-bottom: 4px;
}
.refs {
    width: 270px;
    padding-left: 12px;
    border-right: 1px solid #dcdedf;
    margin-bottom: 5px;
}
.ref-row {
    display: flex;
    align-items: center;
    margin-bottom: 3px;
}
.ref-row span {
    width: 42px;
}
.collector {
    width: 201px;
    height: 26px;
    justify-content: flex-start;
    gap: 5px;
    padding-left: 6px;
    border: 1px solid #a9adae;
    box-shadow: inset 0 0 0 2px #fff;
}
.picked {
    background-color: #e7fbdc;
}
.empty {
    background-color: #f4f0ff;
    gap: 16px;
}
.options {
    width: 462px;
    padding-left: 14px;
    border-right: 1px solid #b7babb;
    margin-bottom: 3px;
}
.option-cols {
    display: flex;
}
.auto-update {
    width: 56px;
    height: 60px;
    flex-direction: column;
    justify-content: flex-start;
    gap: 2px;
    padding-top: 4px;
    border: 1px solid #73cffb;
    border-top-width: 3px;
    background-color: #d1f1ff;
}
.option-col {
    width: 136px;
    margin-left: 17px;
    display: flex;
    flex-direction: column;
    align-items: flex-start;
    gap: 6px;
    padding-top: 2px;
}
.option-col.wide {
    width: auto;
}
.option-line {
    display: flex;
    gap: 4px;
}
.tool {
    height: 25px;
    padding: 0 3px;
    gap: 4px;
    border: 1px solid transparent;
}
.tool.pressed {
    border-color: #a9abac;
}
.pause {
    width: 69px;
    border-right: 1px solid #b7babb;
    margin-bottom: 3px;
}
.pause svg {
    width: 24px;
    height: 22px;
}
.confirm {
    display: flex;
    gap: 10px;
    padding: 24px 0 0 19px;
    align-items: flex-start;
}
.confirm button {
    width: 30px;
    flex-direction: column;
    gap: 7px;
}
.confirm svg {
    width: 30px;
    height: 22px;
}
.panel-tabs {
    height: 24px;
    display: flex;
    gap: 2px;
    background-color: #e9eaeb;
    color: #5c5f60;
}
.panel-tabs button, .spacer {
    width: 70px;
    background-color: #dfe1e2;
    box-shadow: 1px 0 0 #f8fafc;
}
.panel-tabs .long {
    width: 82px;
}
.panel-tabs .spacer {
    width: 53px;
    background: none;
}
.help {
    width: 274px;
    height: 91px;
    margin: 11px 12px 0 auto;
    padding: 10px 7px 9px;
    display: flex;
    flex-direction: column;
    justify-content: space-between;
    background-color: #dfe1e2;
}
.help a {
    color: #0a68a8;
}
.overflow-tools {
    width: 23px;
    margin-bottom: 2px;
    padding: 7px 0 0 7px;
    display: flex;
    flex-direction: column;
    gap: 12px;
    overflow: hidden;
    border-left: 1px solid #b7babb;
}
.overflow-tools span {
    padding-left: 8px;
    white-space: nowrap;
}

/* workspace */
.workspace {
    flex: 1;
    min-height: 0;
    display: flex;
}
.viewport {
    flex: 1;
    min-width: 0;
    position: relative;
    background: linear-gradient(#c6dbed, #97b1d0 50%, #6484b0);
}
.view-toolbar {
    position: absolute;
    top: 7px;
    left: 50%;
    transform: translateX(-50%);
    height: 32px;
    display: flex;
    align-items: center;
    gap: 4px;
    padding: 0 4px;
    background-color: #f8fafc;
    border: 1px solid #9b9fa0;
}
.view-toolbar button {
    width: 22px;
    height: 23px;
}
.model {
    width: 100%;
    height: 100%;
}
.dims {
    font-family: "Liberation Mono", monospace;
    font-size: 14px;
    text-anchor: middle;
    fill: #3f4550;
}

/* navigator */
.navigator {
    width: 211px;
    overflow: hidden;
    background-color: #f8fbfc;
    border-left: 3px solid #dae0df;
}
.nav-tabs {
    height: 26px;
    display: flex;
    background-color: #dae0df;
}
.nav-tabs button {
    width: 32px;
}
.nav-tabs .active {
    background-color: #f8fafc;
}
.pane {
    margin-left: 8px;
    border-bottom: 3px solid #dae0df;
}
.pane:last-child {
    border-bottom: none;
}
.pane-tools {
    height: 32px;
    display: flex;
    align-items: center;
    padding-left: 6px;
}
.caret.big {
    width: 9px;
    height: 7px;
    color: #606465;
}
.kind {
    margin-left: 5px;
}
.grip {
    height: 14px;
    margin: 0 11px 0 5px;
    border-left: 2px dotted #999;
}
.grip.wide {
    margin: 0 11px 0 8px;
}
.pane-tools button {
    width: 24px;
    height: 24px;
    flex: none;
}
.bar {
    height: 22px;
    margin: 0 4px;
    border-left: 1px solid #a9abac;
}
.chevrons {
    margin-left: auto;
    padding: 0 2px 2px 4px;
    font-size: 16px;
}
.filter {
    display: flex;
    align-items: center;
    padding-left: 4px;
    padding-right: 2px;
    position: relative;
}
.filter input {
    flex: 1;
    min-width: 0;
    height: 29px;
    margin: 0 5px 0 4px;
    padding: 0 20px 0 6px;
    background-color: #fff;
    border: 1px solid #a5b0af;
}
.clear {
    position: absolute;
    right: 21px;
    width: 8px;
    height: 8px;
}
.tree {
    list-style: none;
    padding: 5px 0 0;
}
.tree li {
    height: 22px;
    display: flex;
    align-items: center;
    gap: 5px;
    padding-left: 23px;
    position: relative;
    white-space: nowrap;
}
.tree .root {
    padding-left: 3px;
}
.tree li:not(.root)::before {
    content: "";
    position: absolute;
    left: 11px;
    top: 0;
    bottom: 0;
    border-left: 1px solid #c2c5c6;
}
.tree li:not(.root)::after {
    content: "";
    position: absolute;
    left: 12px;
    width: 8px;
    border-top: 1px solid #c2c5c6;
}
.tree .closed:not(.root)::after {
    left: 9px;
    width: 0;
    border: 4px solid transparent;
    border-left: 5px solid #555;
    border-right: none;
}
.layers {
    padding: 0;
    height: 97px;
    overflow: hidden;
}
.layers li {
    height: 20px;
    gap: 9px;
}
.layer-model {
    height: 25px;
    display: flex;
    border: 1px solid #cfd3d3;
    border-right: none;
}
.layer-model button {
    width: 24px;
    background-color: #e8eaeb;
    border-right: 1px solid #cfd3d3;
}
.layer-model input {
    flex: 1;
    min-width: 0;
    padding-left: 7px;
    color: #a2a5a6;
}
.style-tree {
    padding-top: 0;
}
.style-tree .last {
    gap: 4px;
}
.tree .last:not(.root)::before {
    bottom: 11px;
}
.star {
    width: 9px;
    height: 9px;
    margin-bottom: 6px;
    margin-right: -3px;
}

/* taskbar */
.taskbar {
    height: 32px;
    display: flex;
    justify-content: space-between;
    background: linear-gradient(90deg, #8ea6d4, #839bbf 12%, #879fc0 50%, #aabed5 75%, #d5e0ec 86%, #e9eff3 92%, #edf1f3);
}
.apps {
    display: flex;
    align-items: center;
    padding-left: 376px;
}
.apps button {
    width: 34px;
    height: 32px;
}
.apps .start {
    width: 42px;
    padding-right: 6px;
}
.apps svg {
    width: 18px;
    height: 18px;
}
.apps .start svg {
    width: 24px;
    height: 24px;
}
.running::after {
    content: "";
    position: absolute;
    bottom: 1px;
    width: 6px;
    height: 3px;
    border-radius: 2px;
    background-color: #596479;
}
.apps .current {
    width: 28px;
    height: 24px;
    margin: 0 3px;
    border-radius: 3px;
    background-color: #b4c4d9;
}
.current::after {
    bottom: -1px;
    width: 16px;
    background-color: #4cc0f8;
}
.tray {
    display: flex;
    align-items: center;
    gap: 17px;
    padding-right: 19px;
    color: #222;
}
.ime {
    font-size: 14px;
}
.volume {
    margin-left: -9px;
    margin-right: -2px;
}
.clock {
    display: flex;
    flex-direction: column;
    text-align: right;
}

/* forum watermark over the corner */
.watermark {
    position: absolute;
    right: 17px;
    bottom: 6px;
    width: 168px;
    font-style: italic;
}
.watermark svg {
    position: absolute;
    left: 58px;
    top: 0;
    width: 24px;
    height: 46px;
}
.forum {
    padding-top: 16px;
    font-family: "Noto Sans CJK SC", sans-serif;
    font-weight: 400;
    font-size: 41px;
    line-height: 44px;
    white-space: nowrap;
    color: #000;
}
.forum span {
    color: #ff6430;
}
.site {
    font-family: "DejaVu Sans", sans-serif;
    font-size: 15px;
    line-height: 18px;
    white-space: nowrap;
    color: #8e9295;
}
```
